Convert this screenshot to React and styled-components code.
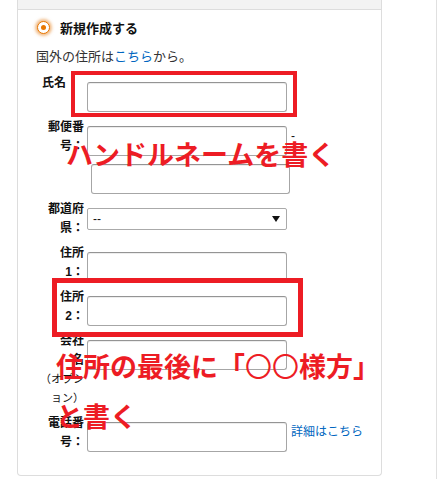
import React from 'react';
import styled, { createGlobalStyle } from 'styled-components';

const GlobalStyle = createGlobalStyle`
  html, body {
    margin: 0;
    padding: 0;
    background: #fff;
  }
  body {
    font-family: Arial, "Noto Sans CJK JP", sans-serif;
    color: #111;
  }
`;

const Page = styled.div`
  position: relative;
  box-sizing: border-box;
  width: 437px;
  height: 479px;
  padding-left: 17px;
  border-right: 1px solid #e0e0e0;
  overflow: hidden;
`;

const Panel = styled.div`
  box-sizing: border-box;
  width: 365px;
  border: 1px solid #dddddd;
  border-top: none;
  border-radius: 0 0 4px 4px;
  background: #fff;
`;

const PanelHead = styled.div`
  height: 9px;
  background: #f3f3f3;
  border-bottom: 1px solid #dddddd;
`;

const PanelBody = styled.div`
  padding: 7px 18px 23px;
`;

const RadioRow = styled.label`
  display: flex;
  align-items: center;
  gap: 10px;
  height: 20px;
  font-size: 13px;
  font-weight: 700;
`;

const Radio = styled.span`
  box-sizing: border-box;
  display: flex;
  align-items: center;
  justify-content: center;
  width: 13px;
  height: 13px;
  margin-left: 1px;
  border-radius: 50%;
  border: 1px solid #e77600;
  background: #fff;
  box-shadow: 0 0 3px 2px rgba(228, 121, 17, 0.5);

  &::after {
    content: '';
    width: 5px;
    height: 5px;
    border-radius: 50%;
    background: #e77600;
  }
`;

const Note = styled.p`
  margin: 10px 0 0;
  font-size: 13px;
  line-height: 19px;
  color: #333;
`;

const Link = styled.a`
  color: #0066c0;
  text-decoration: none;
  font-size: ${p => p.size || 'inherit'};
  line-height: ${p => p.lh || 'inherit'};
`;

const Form = styled.div`
  display: flex;
  flex-direction: column;
  gap: 6px;
  margin-top: 8px;
`;

const Row = styled.div`
  display: flex;
  align-items: flex-start;
  gap: 3px;
`;

const Label = styled.div`
  box-sizing: border-box;
  flex: 0 0 48px;
  padding-right: ${p => p.inset || 0}px;
  text-align: right;
  font-size: 12px;
  font-weight: 700;
  line-height: 19px;
  color: #111;
`;

const Sub = styled.span`
  display: block;
  font-size: 11px;
  font-weight: 400;
`;

const Field = styled.div`
  display: flex;
  flex-direction: column;
  gap: 8px;
  margin-top: 8px;
`;

const Line = styled.div`
  display: flex;
  align-items: flex-start;
  gap: 4px;
  padding-left: ${p => p.indent || 0}px;
`;

const Input = styled.input`
  box-sizing: border-box;
  width: ${p => p.w || 200}px;
  height: 30px;
  padding: 3px 7px;
  border: 1px solid #a6a6a6;
  border-top-color: #949494;
  border-radius: 3px;
  background: #fff;
  box-shadow: 0 1px 0 rgba(255, 255, 255, 0.5), 0 1px 0 rgba(0, 0, 0, 0.07) inset;
  font: 13px Arial, "Noto Sans CJK JP", sans-serif;
  outline: none;
`;

const Aside = styled.span`
  font-size: 12px;
  line-height: 20px;
  color: #111;
`;

const Select = styled.div`
  box-sizing: border-box;
  display: flex;
  align-items: center;
  justify-content: space-between;
  width: 200px;
  height: 22px;
  padding: 0 5px;
  border: 1px solid #aaaaaa;
  border-radius: 2px;
  background: #fff;
  font-size: 12px;
  color: #111;
`;

const Caret = styled.svg`
  width: 8px;
  height: 6px;
  margin-right: 1px;
`;

const Mark = styled.div`
  position: absolute;
  box-sizing: border-box;
  left: ${p => p.x}px;
  top: ${p => p.y}px;
  width: ${p => p.w}px;
  height: ${p => p.h}px;
  border: ${p => p.t}px solid #ed1c24;
  pointer-events: none;
`;

const Callout = styled.div`
  position: absolute;
  left: ${p => p.x}px;
  top: ${p => p.y}px;
  font-family: "Noto Sans CJK JP", sans-serif;
  font-size: 27px;
  font-weight: 700;
  line-height: ${p => p.lh || 30}px;
  color: #ed1c24;
  white-space: nowrap;
  pointer-events: none;
`;

// the circle marks in the reference are thin rings
const Thin = styled.span`
  font-weight: 400;
`;

export default function App() {
  return (
    <>
      <GlobalStyle />
      <Page>
        <Panel>
          <PanelHead />
          <PanelBody>
            <RadioRow>
              <Radio />
              新規作成する
            </RadioRow>
            <Note>
              国外の住所は<Link href="#">こちら</Link>から。
            </Note>
            <Form>
              <Row>
                <Label inset={18}>氏名</Label>
                <Field>
                  <Input />
                </Field>
              </Row>
              <Row>
                <Label>郵便番<br />号：</Label>
                <Field>
                  <Line>
                    <Input />
                    <Aside>-</Aside>
                  </Line>
                  <Line indent={4}>
                    <Input w={199} />
                  </Line>
                </Field>
              </Row>
              <Row>
                <Label>都道府<br />県：</Label>
                <Field>
                  <Select>
                    <span>--</span>
                    <Caret viewBox="0 0 8 6">
                      <path d="M0 0h8L4 6z" fill="#111" />
                    </Caret>
                  </Select>
                </Field>
              </Row>
              <Row>
                <Label>住所<br />1：</Label>
                <Field>
                  <Input />
                </Field>
              </Row>
              <Row>
                <Label>住所<br />2：</Label>
                <Field>
                  <Input />
                </Field>
              </Row>
              <Row>
                <Label>
                  会社<br />名
                  <Sub>（オプシ<br />ョン）</Sub>
                </Label>
                <Field>
                  <Input />
                </Field>
              </Row>
              <Row>
                <Label>電話番<br />号：</Label>
                <Field>
                  <Line>
                    <Input />
                    <Link href="#" size="12px" lh="20px">詳細はこちら</Link>
                  </Line>
                </Field>
              </Row>
            </Form>
          </PanelBody>
        </Panel>

        <Mark x={71} y={71} w={226} h={46} t={4} />
        <Callout x={66} y={139}>ハンドルネームを書く</Callout>
        <Mark x={52} y={278} w={251} h={59} t={5} />
        <Callout x={56} y={341} lh={50}>
          住所の最後に「<Thin>〇〇</Thin>様方」
          <br />
          と書く
        </Callout>
      </Page>
    </>
  );
}
